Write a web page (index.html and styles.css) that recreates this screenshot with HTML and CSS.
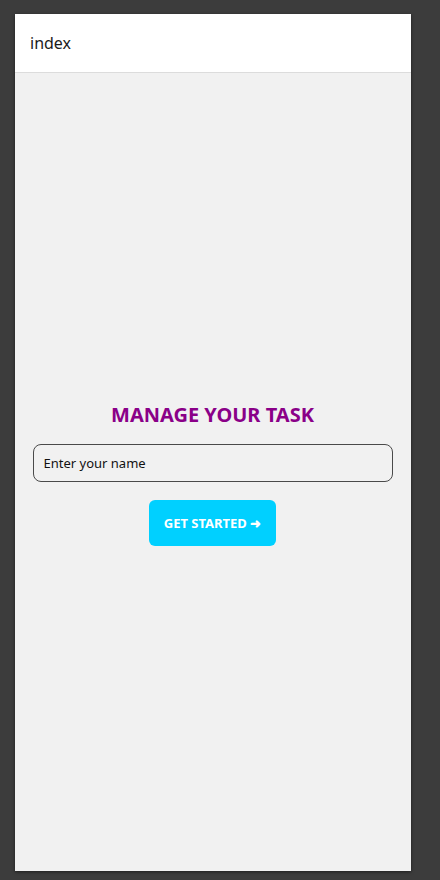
FILE: index.html
```html
<!DOCTYPE html>
<html>
<head>
<meta charset="utf-8">
<link rel="stylesheet" href="styles.css">
</head>
<body>
<div class="frame">
  <header class="topbar"><span class="title">index</span></header>
  <main class="content">
    <h1 class="heading">MANAGE YOUR TASK</h1>
    <input class="name-input" type="text" placeholder="Enter your name">
    <button class="start-btn">GET STARTED ➜</button>
  </main>
</div>
</body>
</html>
```
FILE: styles.css
```css
html, body {
  margin: 0;
  padding: 0;
  background: #3c3c3c;
  height: 880px;
  overflow: hidden;
}
body {
  padding: 14px 0 0 15px;
  box-sizing: border-box;
  font-family: "Noto Sans", "Open Sans", sans-serif;
}
.frame {
  width: 396px;
  height: 857px;
  background: #f1f1f1;
  display: flex;
  flex-direction: column;
  box-shadow: 0 1px 3px rgba(0,0,0,0.5);
}
.topbar {
  height: 58px;
  background: #ffffff;
  border-bottom: 1px solid #dcdcdc;
  display: flex;
  align-items: center;
  padding-left: 15px;
  flex-shrink: 0;
}
.title {
  font-size: 16px;
  color: #1b1b1b;
  margin-top: -1px;
}
.content {
  flex: 1;
  display: flex;
  flex-direction: column;
  align-items: center;
  justify-content: center;
  padding: 0 18px 0 17px;
  margin-top: 4px;
}
.heading {
  margin: 0 0 16px;
  font-size: 20px;
  font-weight: 700;
  color: #8a0088;
  line-height: 26px;
}
.name-input {
  box-sizing: border-box;
  width: 360px;
  height: 38px;
  border: 1px solid #4a4a4a;
  border-radius: 8px;
  background: #f1f1f1;
  padding: 0 10px;
  font-family: "Noto Sans", "Open Sans", sans-serif;
  font-size: 13px;
  color: #000;
}
.name-input::placeholder {
  color: #111;
}
.start-btn {
  margin-top: 18px;
  width: 127px;
  height: 46px;
  border: none;
  border-radius: 6px;
  background: #00d0ff;
  color: #ffffff;
  font-family: "Noto Sans", "Open Sans", sans-serif;
  font-weight: 700;
  font-size: 13px;
  padding: 0;
}
```
